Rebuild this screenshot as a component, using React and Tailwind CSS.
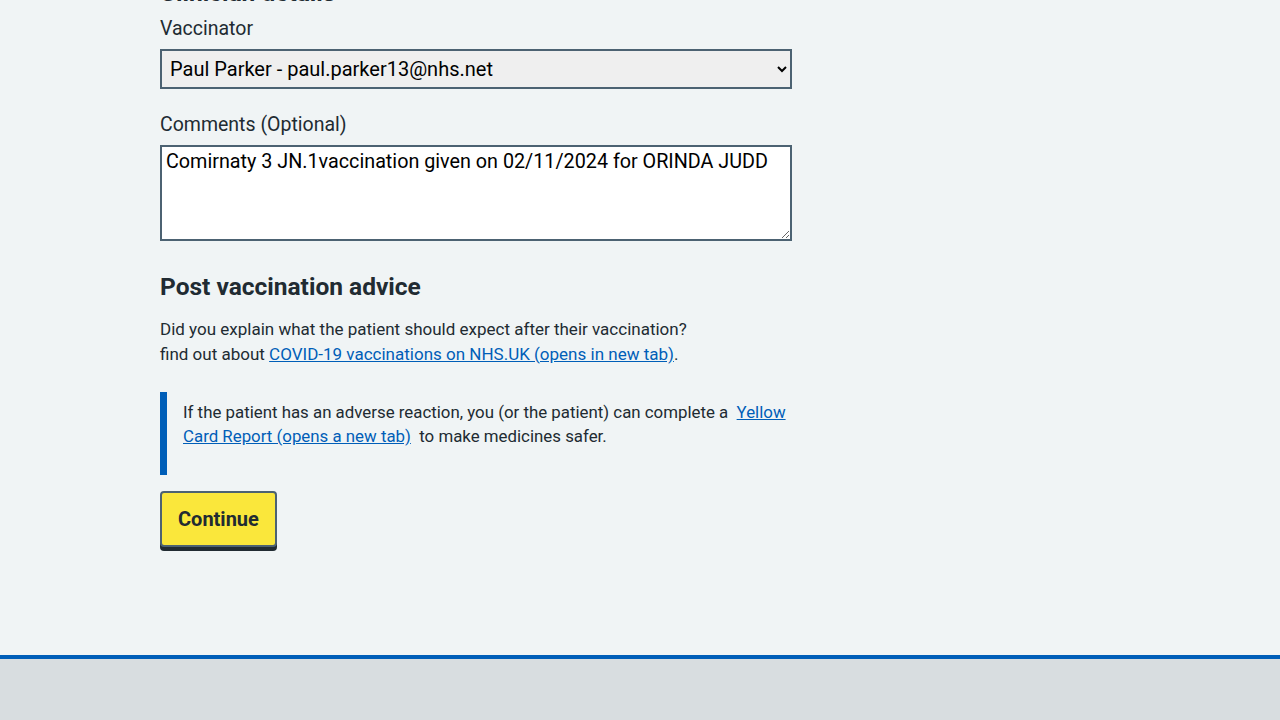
const FONT = "font-['Roboto','Liberation_Sans',sans-serif]";

function Label({ children }) {
  return <label className="block text-[19.5px] leading-[28px] text-[#212b32] mb-[6px]">{children}</label>;
}

export default function App() {
  return (
    <div className={`${FONT} min-h-[720px] flex flex-col bg-[#f0f4f5] text-[#212b32] overflow-hidden`}>
      <main className="flex-1 pl-[160px] w-[792px] -mt-[23px]">
        <h2 className="text-[24.5px] leading-[32px] font-bold">Clinician details</h2>
        <div className="mt-[6px]">
          <Label>Vaccinator</Label>
          <select className="w-[632px] h-[40px] border-2 border-[#4c6272] bg-[#efefef] text-[20px] text-black pl-[4px] pr-[4px] rounded-none">
            <option>Paul Parker - paul.parker13@nhs.net</option>
          </select>
        </div>
        <div className="mt-[22px]">
          <Label>Comments (Optional)</Label>
          <textarea
            className="block w-[632px] h-[96px] border-2 border-[#4c6272] bg-white text-[19.75px] leading-[26px] text-black px-[4px] py-[2px] rounded-none"
            defaultValue="Comirnaty 3 JN.1vaccination given on 02/11/2024 for ORINDA JUDD"
          />
        </div>
        <h2 className="mt-[30px] text-[24.5px] leading-[32px] font-bold">Post vaccination advice</h2>
        <p className="mt-[14px] text-[17px] leading-[25px]">
          Did you explain what the patient should expect after their vaccination?
          <br />
          find out about{" "}
          <a href="#" className="text-[#005eb8] underline">COVID-19 vaccinations on NHS.UK (opens in new tab)</a>.
        </p>
        <div className="mt-[25px] border-l-[7px] border-[#005eb8] pl-[16px] pt-[8px] pb-[27px] text-[16.85px] leading-[24px]">
          If the patient has an adverse reaction, you (or the patient) can complete a&nbsp;{" "}
          <a href="#" className="text-[#005eb8] underline">Yellow Card Report (opens a new tab)</a>&nbsp;{" "}
          to make medicines safer.
        </div>
        <button className="mt-[16px] h-[56px] px-[16px] bg-[#fae73b] border-2 border-[#4c6272] rounded-[4px] shadow-[0_4px_0_#212b32] text-[20px] font-bold text-[#212b32]">
          Continue
        </button>
      </main>
      <footer className="mt-[104px] h-[65px] border-t-4 border-[#005eb8] bg-[#d8dde0]" />
    </div>
  );
}
